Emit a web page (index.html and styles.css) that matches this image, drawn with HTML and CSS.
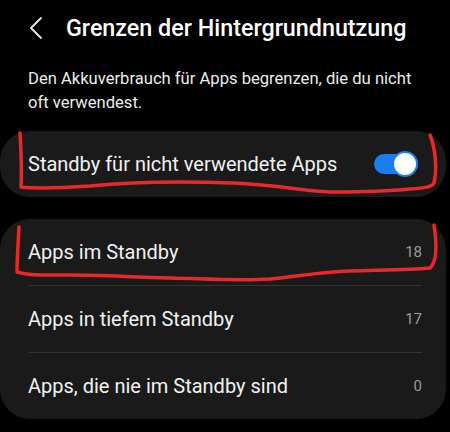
FILE: index.html
```html
<!DOCTYPE html>
<html lang="de">
<head>
<meta charset="utf-8">
<link rel="stylesheet" href="styles.css">
</head>
<body>
<div class="page">
  <header class="header">
    <svg class="back" width="14" height="22" viewBox="0 0 14 22"><path d="M12 1 L2 11 L12 21" fill="none" stroke="#e8e8e8" stroke-width="1.8" stroke-linecap="round" stroke-linejoin="round"/></svg>
    <h1 class="title">Grenzen der Hintergrundnutzung</h1>
  </header>
  <p class="desc">Den Akkuverbrauch für Apps begrenzen, die du nicht oft verwendest.</p>
  <div class="card card-toggle">
    <span class="label">Standby für nicht verwendete Apps</span>
    <span class="switch"><span class="track"></span><span class="thumb"></span></span>
  </div>
  <div class="card card-list">
    <div class="row"><span class="label">Apps im Standby</span><span class="count">18</span></div>
    <div class="row"><span class="label">Apps in tiefem Standby</span><span class="count">17</span></div>
    <div class="row"><span class="label">Apps, die nie im Standby sind</span><span class="count">0</span></div>
  </div>
  <svg class="marks" width="450" height="432" viewBox="0 0 450 432">
    <path d="M20 133 C21 150 22 170 21 187 C40 189 60 188 90 186 C130 182 180 181 233 183 C280 185 310 192 333 192 C360 192 390 191 410 189 C425 188 432 187 434 183 C437 170 436 150 430 135" fill="none" stroke="#e8282b" stroke-width="3.5" stroke-linecap="round" stroke-linejoin="round"/>
    <path d="M19 227 C18 245 17 260 17 272 C30 276 45 275 70 275 C100 275 130 277 170 278 C210 279 240 281 270 279 C300 276 320 272 350 271 C380 270 410 270 430 268 C437 262 437 245 434 225" fill="none" stroke="#e8282b" stroke-width="3.5" stroke-linecap="round" stroke-linejoin="round"/>
  </svg>
</div>
</body>
</html>
```

FILE: styles.css
```css
html, body {
  margin: 0;
  padding: 0;
  background: #000;
}
.page {
  position: relative;
  width: 450px;
  height: 432px;
  overflow: hidden;
  font-family: Roboto, "Noto Sans", sans-serif;
  color: #f2f2f2;
}
.header {
  display: flex;
  align-items: center;
  height: 56px;
  padding-left: 29px;
  box-sizing: border-box;
}
.back {
  display: block;
}
.title {
  margin: 0 0 0 23px;
  font-size: 23.3px;
  font-weight: 500;
  color: #fff;
}
.desc {
  margin: 11px 0 0 0;
  padding: 0 30px 0 28px;
  font-size: 16.6px;
  line-height: 24px;
  color: #ececec;
}
.card {
  background: #1a1a1a;
  border-radius: 30px;
  width: 446px;
  box-sizing: border-box;
}
.card-toggle {
  margin-top: 16px;
  height: 66px;
  display: flex;
  align-items: center;
  justify-content: space-between;
  padding: 0 28px 0 28px;
}
.label {
  font-size: 20px;
  color: #f2f2f2;
}
.switch {
  position: relative;
  width: 44px;
  height: 26px;
  display: block;
}
.track {
  position: absolute;
  left: 0;
  top: 3px;
  width: 32px;
  height: 20px;
  border-radius: 10px;
  background: #1a7ef2;
}
.thumb {
  position: absolute;
  right: 0;
  top: 0;
  width: 22px;
  height: 22px;
  border-radius: 50%;
  background: #fff;
  border: 2px solid #1a7ef2;
}
.card-list {
  margin-top: 22px;
  padding: 0 24px 0 28px;
}
.row {
  height: 66px;
  display: flex;
  align-items: center;
  justify-content: space-between;
  border-bottom: 1px solid #333;
}
.row:last-child {
  border-bottom: none;
}
.count {
  font-size: 15px;
  color: #9c9c9c;
}
.marks {
  position: absolute;
  left: 0;
  top: 0;
  pointer-events: none;
}
```
